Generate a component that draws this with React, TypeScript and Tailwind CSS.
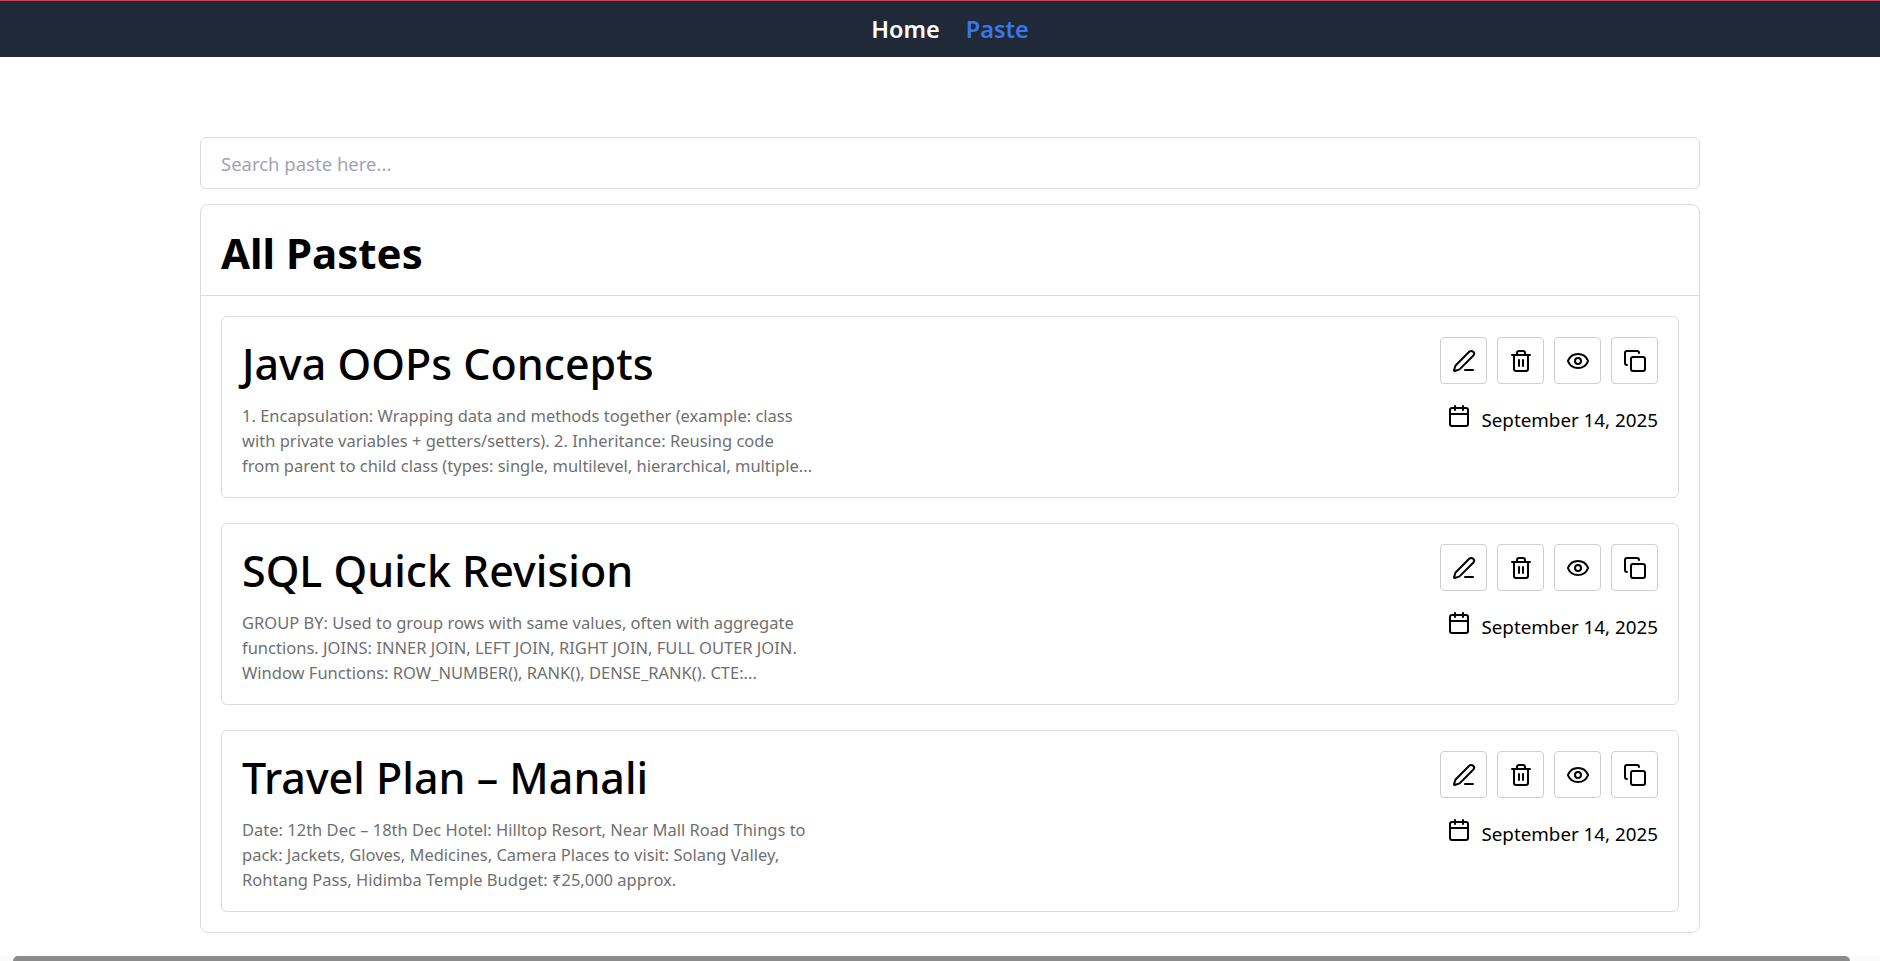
import { Calendar, Copy, Eye, PenLine, Trash2 } from 'lucide-react';

const pastes = [
  {
    title: 'Java OOPs Concepts',
    lines: [
      '1. Encapsulation: Wrapping data and methods together (example: class',
      'with private variables + getters/setters). 2. Inheritance: Reusing code',
      'from parent to child class (types: single, multilevel, hierarchical, multiple...',
    ],
  },
  {
    title: 'SQL Quick Revision',
    lines: [
      'GROUP BY: Used to group rows with same values, often with aggregate',
      'functions. JOINS: INNER JOIN, LEFT JOIN, RIGHT JOIN, FULL OUTER JOIN.',
      'Window Functions: ROW_NUMBER(), RANK(), DENSE_RANK(). CTE:...',
    ],
  },
  {
    title: 'Travel Plan – Manali',
    lines: [
      'Date: 12th Dec – 18th Dec Hotel: Hilltop Resort, Near Mall Road Things to',
      'pack: Jackets, Gloves, Medicines, Camera Places to visit: Solang Valley,',
      'Rohtang Pass, Hidimba Temple Budget: ₹25,000 approx.',
    ],
  },
];

const actions = [PenLine, Trash2, Eye, Copy];

export default function App() {
  return (
    <div className="relative h-[961px] overflow-hidden bg-white text-black font-['Noto_Sans','Open_Sans',sans-serif]">
      <div className="w-[1900px]">
        <nav className="flex h-[57px] items-center justify-center gap-[26px] border-t border-[#c9415f] bg-[#1f2937] pt-[2px] text-[23.5px] font-semibold">
          <a className="text-white">Home</a>
          <a className="text-[#3b76ee]">Paste</a>
        </nav>

        <main className="mx-auto flex w-[1500px] flex-col gap-[15px] pt-[80px]">
          <input
            placeholder="Search paste here..."
            className="h-[52px] w-full rounded-md border border-[#dcdcdc] bg-white px-5 text-[18.5px] outline-none placeholder:text-[#a3a3b0]"
          />

          <section className="rounded-lg border border-[#dcdcdc]">
            <h2 className="border-b border-[#dcdcdc] px-5 pb-[11px] pt-[16px] text-[42px] font-bold leading-[63px]">
              All Pastes
            </h2>
            <div className="flex flex-col gap-[25px] p-5">
              {pastes.map((paste) => (
                <article
                  key={paste.title}
                  className="flex h-[182px] justify-between rounded-md border border-[#dcdcdc] px-5 pt-5"
                >
                  <div>
                    <h3 className="text-[43px] font-medium leading-[54px]">{paste.title}</h3>
                    <div className="mt-[12px] text-[16.5px] leading-[25px] text-[#707070]">
                      {paste.lines.map((line) => (
                        <p key={line} className="whitespace-nowrap">
                          {line}
                        </p>
                      ))}
                    </div>
                  </div>
                  <div className="flex flex-col items-end gap-5">
                    <div className="flex gap-[10px]">
                      {actions.map((Icon, index) => (
                        <button
                          key={index}
                          className="flex h-[47px] w-[47px] items-center justify-center rounded-[4px] border border-[#cfcfcf] bg-white"
                        >
                          <Icon size={24} strokeWidth={2} />
                        </button>
                      ))}
                    </div>
                    <div className="flex items-start gap-[10px] text-[18.8px] leading-[24px]">
                      <Calendar size={24} strokeWidth={2} />
                      <span className="mt-[4px]">September 14, 2025</span>
                    </div>
                  </div>
                </article>
              ))}
            </div>
          </section>
        </main>
      </div>

      {/* horizontal scrollbar, cut off by the bottom of the window */}
      <div className="absolute inset-x-0 bottom-0 h-[5px] bg-[#fafafa] px-[13px]">
        <div className="h-full w-[1837px] rounded-t-[5px] bg-[#8b8b8b]" />
      </div>
    </div>
  );
}
